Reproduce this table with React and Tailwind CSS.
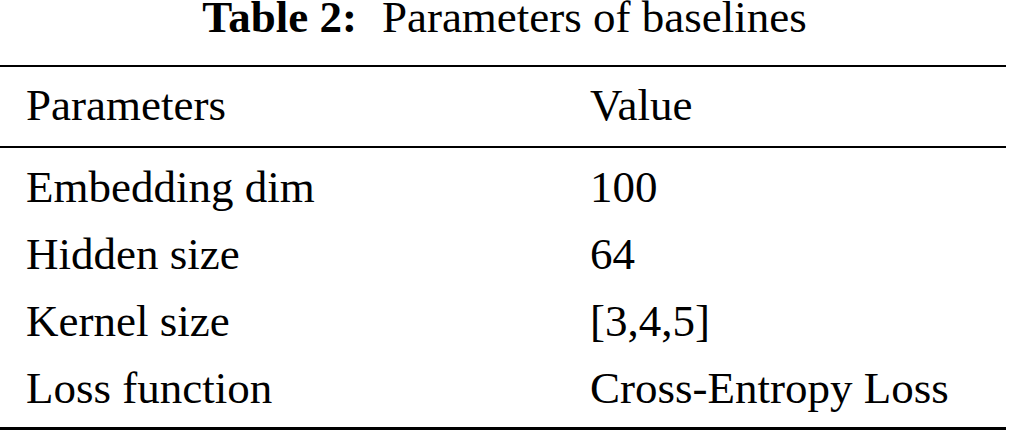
export default function App() {
  const rows = [
    ["Embedding dim", "100"],
    ["Hidden size", "64"],
    ["Kernel size", "[3,4,5]"],
    ["Loss function", "Cross-Entropy Loss"],
  ];
  return (
    <div
      className="w-[1009px] h-[431px] bg-white text-black overflow-hidden"
      style={{ fontFamily: '"Liberation Serif", "Times New Roman", serif' }}
    >
      <div className="pt-[0px]">
        <div className="-mt-[5px] text-center text-[45px] leading-[45px]">
          <span className="font-bold">Table 2:</span>
          <span className="ml-[25px]">Parameters of baselines</span>
        </div>
      </div>
      <div className="mt-[25px] w-[1006px] h-[2px] bg-black" />
      <div className="mt-[5px] flex text-[45px] leading-[66px]">
        <div className="w-[590px] pl-[26px]">Parameters</div>
        <div>Value</div>
      </div>
      <div className="mt-[8px] w-[1006px] h-[2px] bg-black" />
      <div className="mt-[6px] flex flex-col text-[45px] leading-[67px]">
        {rows.map(([k, v]) => (
          <div key={k} className="flex">
            <div className="w-[590px] pl-[26px]">{k}</div>
            <div>{v}</div>
          </div>
        ))}
      </div>
      <div className="mt-[5px] w-[1006px] h-[3px] bg-black" />
    </div>
  );
}
